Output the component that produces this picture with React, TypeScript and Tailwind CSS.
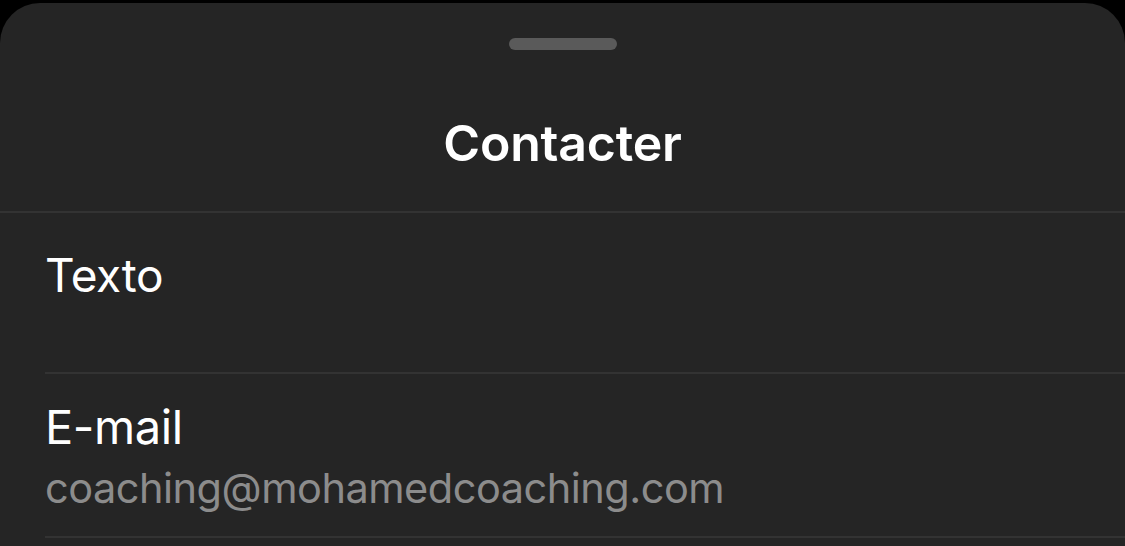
export default function App() {
  return (
    <div className="h-[546px] w-full overflow-hidden bg-black pt-[3px]" style={{ fontFamily: "Inter, 'Noto Sans', sans-serif" }}>
      <div className="h-full rounded-t-[40px] bg-[#252525]">
        {/* grabber */}
        <div className="flex justify-center pt-[35px]">
          <div className="h-[12px] w-[108px] rounded-full bg-[#5a5a5a]" />
        </div>

        {/* header */}
        <div className="flex h-[163px] items-center justify-center border-b-2 border-[#333333] pt-[26px]">
          <h1 className="text-[50px] font-semibold tracking-[-0.2px] text-white">Contacter</h1>
        </div>

        {/* options */}
        <div className="pl-[45px]">
          <div className="h-[161px] border-b-2 border-[#333333] pt-[35px]">
            <div className="text-[46px] leading-[54px] tracking-[-0.4px] text-white">Texto</div>
          </div>
          <div className="h-[164px] border-b-2 border-[#333333] pt-[26px]">
            <div className="text-[47px] leading-[54px] tracking-[-0.4px] text-white">E-mail</div>
            <div className="mt-[10px] text-[41.5px] leading-[48px] tracking-[-0.5px] text-[#8c8c8c]">coaching@mohamedcoaching.com</div>
          </div>
        </div>
      </div>
    </div>
  );
}
